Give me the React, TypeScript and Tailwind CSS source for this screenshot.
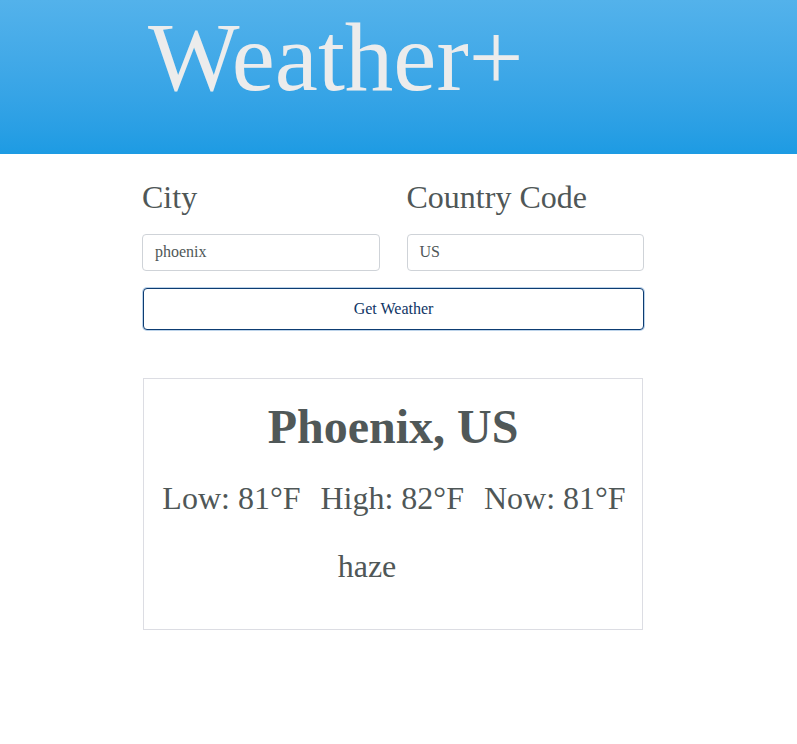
import React from "react";

export default function App() {
  const serif = { fontFamily: '"Liberation Serif", "Times New Roman", serif' };
  return (
    <div className="min-h-[744px] bg-white" style={serif}>
      <header className="h-[154px] bg-gradient-to-b from-[#53b2eb] to-[#1d9be3]">
        <div className="ml-[142px] pt-[9px]">
          <h1 className="text-[97px] leading-none text-[#ececec] pl-[6px]">Weather+</h1>
        </div>
      </header>
      <main className="ml-[142px] w-[502px]">
        <div className="flex gap-[27px] pt-[27px]">
          <div className="flex w-[238px] flex-col">
            <label className="text-[32px] leading-none text-[#4f5757]">City</label>
            <div className="mt-[21px] flex h-[37px] items-center rounded-[4px] border border-[#cfd3d8] px-[12px] pb-px text-[16px] text-[#4f5757]">
              phoenix
            </div>
          </div>
          <div className="flex w-[238px] flex-col">
            <label className="text-[32px] leading-none text-[#4f5757]">Country Code</label>
            <div className="mt-[21px] flex h-[37px] items-center rounded-[4px] border border-[#cfd3d8] px-[12px] pb-px text-[16px] text-[#4f5757]">
              US
            </div>
          </div>
        </div>
        <button
          className="mt-[17px] ml-px flex h-[42px] w-[501px] items-center justify-center rounded-[4px] border border-[#0d3c72] bg-white text-[16px] text-[#0f3565] shadow-[0_0_0_1px_#bcd3ea]"
          style={serif}
        >
          Get Weather
        </button>
        <section className="mt-[48px] ml-px w-[500px] border border-[#dcdde3] pt-[24px] pb-[47px] text-[#4f5757]">
          <h2 className="text-center text-[48px] font-bold leading-none text-[#505858]">Phoenix, US</h2>
          <div className="mt-[31px] flex justify-center gap-[20px] text-[32px] leading-none">
            <span className="pl-[2px]">Low: 81°F</span>
            <span>High: 82°F</span>
            <span>Now: 81°F</span>
          </div>
          <div className="mt-[36px] flex justify-center text-[32px] leading-none">
            <span>haze</span>
            <span className="w-[52px]" />
          </div>
        </section>
      </main>
    </div>
  );
}
